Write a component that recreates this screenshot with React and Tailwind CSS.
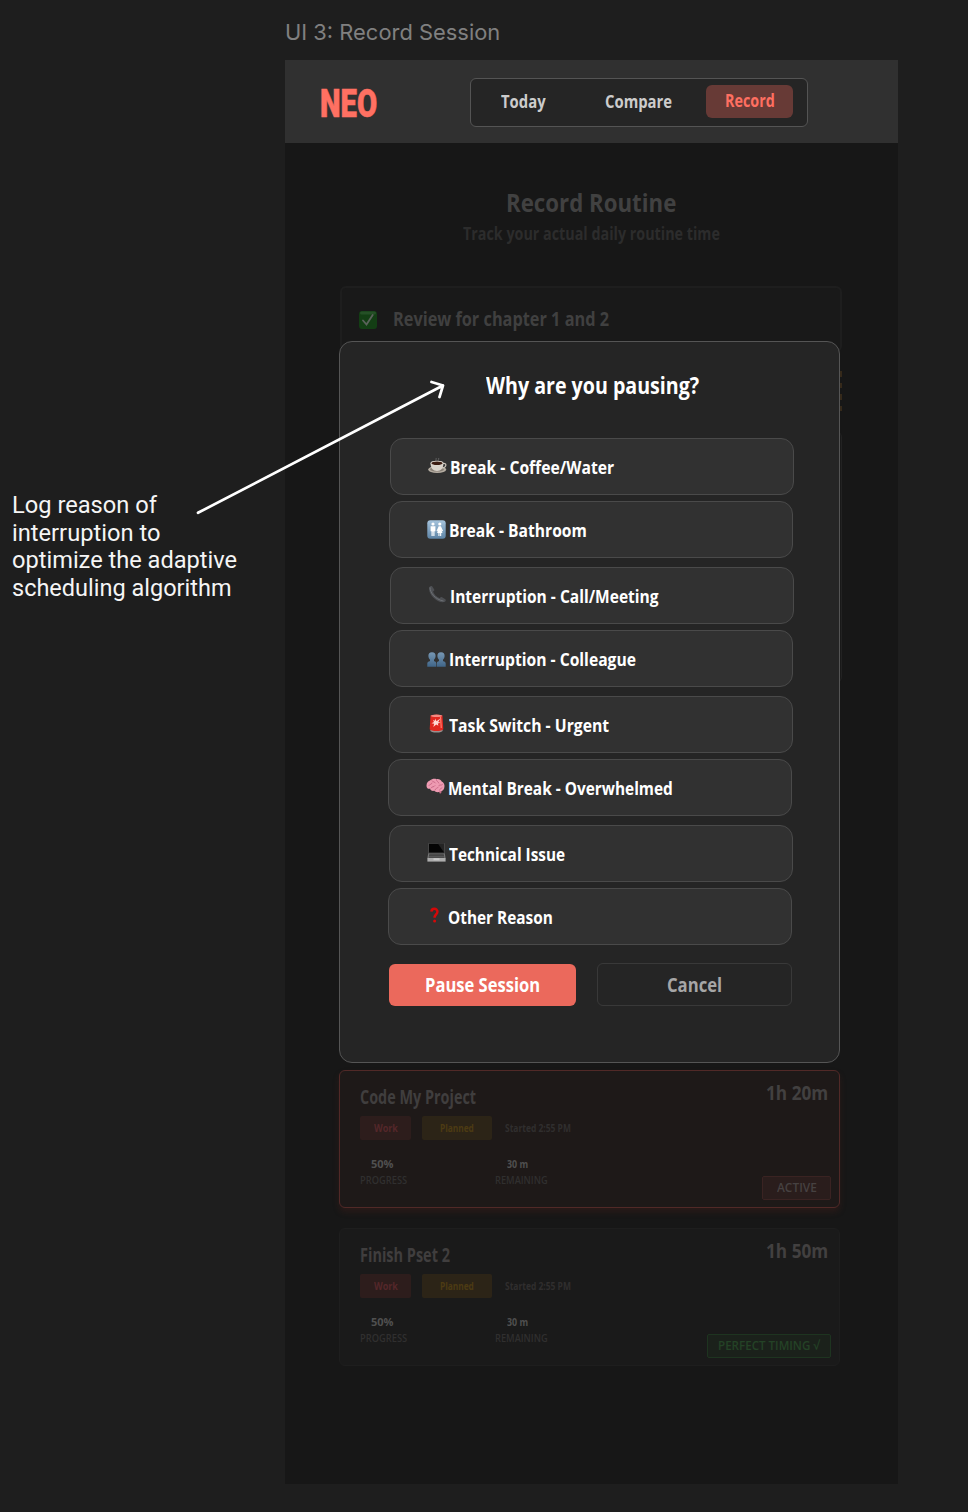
import React, { useLayoutEffect, useRef } from "react";

// Text squeezed horizontally so that it fills the width of its box.
function Fit({ className = "", children }) {
  const box = useRef(null);
  const inner = useRef(null);
  useLayoutEffect(() => {
    const natural = inner.current.offsetWidth;
    if (natural) {
      inner.current.style.transform = `scaleX(${box.current.clientWidth / natural})`;
    }
  }, []);
  return (
    <span ref={box} className={`flex shrink-0 items-center whitespace-nowrap ${className}`}>
      <span ref={inner} className="block shrink-0 origin-left">{children}</span>
    </span>
  );
}

function CoffeeIcon() {
  return (
    <svg viewBox="0 0 19 19" className="size-[19px]">
      <path d="M8 4c-1-1 1-1.500 0-3M10.500 4c-1-1 1-1.500 0-3" stroke="#6b6b6b" fill="none" strokeWidth=".8" />
      <ellipse cx="9.200" cy="12.500" rx="9" ry="3.600" fill="#b5ada2" />
      <ellipse cx="9" cy="12.300" rx="7" ry="2.300" fill="#877f75" />
      <path d="M15 6.500c4-.8 4 4-1 4.500" stroke="#c9c2b8" fill="none" strokeWidth="1.200" />
      <path d="M2.500 6c0 5 2.500 8 6.500 8s6.500-3 6.500-8z" fill="#d9d3ca" />
      <ellipse cx="9" cy="6" rx="6.500" ry="2.300" fill="#e8e2da" />
      <ellipse cx="9" cy="6.200" rx="5.600" ry="1.700" fill="#3c1d12" />
    </svg>
  );
}

function RestroomIcon() {
  return (
    <svg viewBox="0 0 19 19" className="size-[19px]">
      <defs>
        <linearGradient id="wc" x1="0" y1="0" x2="0" y2="1">
          <stop offset="0" stopColor="#a5c3dc" />
          <stop offset="1" stopColor="#5d84a6" />
        </linearGradient>
      </defs>
      <rect x=".3" y=".3" width="18.400" height="18.400" rx="3" fill="url(#wc)" />
      <circle cx="6" cy="4" r="1.600" fill="#fff" />
      <path d="M3.600 6.200h4.800v5h-.9V16H6.300v-4.500h-.6V16H4.500v-4.800h-.9z" fill="#fff" />
      <circle cx="12.800" cy="4" r="1.600" fill="#fff" />
      <path d="M11.700 6.200h2.200l2.200 4.800-1 .3-.8-1.600 1.200 3.300h-1.300V16h-1.100v-3h-.6v3h-1.100v-3h-1.300l1.200-3.300-.8 1.600-1-.3z" fill="#fff" />
    </svg>
  );
}

function PhoneIcon() {
  return (
    <svg viewBox="0 0 19 19" className="size-[19px]">
      <path d="M1.300 2.300C2 1 3.500.7 4.300 1.500l1.900 3c.5.900-.2 1.600-1.200 2.100.9 2.800 3.500 5.400 6.800 6.600.6-1 1.500-1.400 2.300-.9l3.200 1.900c1 .7.500 2.200-.9 2.900C9 18.500-.5 9 1.300 2.300z" fill="#4d4f53" />
      <path d="M2 2.400C2 7.500 7 14.500 15.500 16" stroke="#74777b" fill="none" strokeWidth=".8" />
    </svg>
  );
}

function PeopleIcon() {
  return (
    <svg viewBox="0 0 19 19" className="size-[19px]">
      <defs>
        <linearGradient id="ppl" x1="0" y1="0" x2="0" y2="1">
          <stop offset="0" stopColor="#7797b3" />
          <stop offset="1" stopColor="#3f6588" />
        </linearGradient>
      </defs>
      <path d="M5 2.200c2.600 0 3.700 1.500 3.600 3.800-.1 1.800-.8 3.100-1.600 3.700v1.300c1.200.6 2.200.8 2.200 2.500v3.300H.3v-3.300c0-1.700 1.500-1.900 2.700-2.500V9.700C2.200 9.100 1.500 7.800 1.400 6 1.300 3.700 2.400 2.200 5 2.200z" fill="url(#ppl)" />
      <path d="M14 2.200c2.600 0 3.700 1.500 3.600 3.800-.1 1.800-.8 3.100-1.600 3.700v1.300c1.200.6 2.700.8 2.700 2.500v3.300H9.800v-3.300c0-1.700 1-1.900 2.200-2.500V9.700c-.8-.6-1.500-1.900-1.600-3.700-.1-2.300 1-3.800 3.600-3.800z" fill="url(#ppl)" />
    </svg>
  );
}

function SirenIcon() {
  return (
    <svg viewBox="0 0 19 19" className="size-[19px]">
      <ellipse cx="9.500" cy="16.600" rx="6.300" ry="2" fill="#989290" />
      <path d="M3.500 1.800c0-1.500 12-1.500 12 0l.8 13.500c-1 2.400-12.600 2.400-13.600 0z" fill="#e0271f" />
      <ellipse cx="9.500" cy="1.800" rx="5.800" ry="1.200" fill="#f48a82" />
      <path d="M13.500 3l.8 11" stroke="#ff7565" strokeWidth="1.300" />
      <path d="M8.500 4.500l.9 2.700 4-2.800-2.200 3.500 2.300.9-2.700.6.600 2.300-2.200-1.300-2.900 2.600.9-3.200-2.700-.5 2.500-1.300-1-1.900 2 .7z" fill="#ffd9d4" />
    </svg>
  );
}

function BrainIcon() {
  return (
    <svg viewBox="0 0 19 19" className="size-[19px]">
      <path d="M12 12.500l1.800 4c1.500.3 2-1 1.600-3.500z" fill="#c66c86" />
      <path d="M.5 8.500C.5 5.500 2.500 4 4 3.500 6 1.500 9 1.500 10.500 2.200c2.500-.5 4.500.8 5.200 2.200 2 .8 2.800 2.800 2.800 4.600 0 3.300-1.700 5.300-4.500 5.300-1.500 1.500-4.700 1-5.700-.5-2.500.5-3.800-.6-4.300-2C1.700 12.200.5 10.800.5 8.500z" fill="#ee9bb2" />
      <path d="M3 8.500c1-2 2.500-.5 3-2.500M6 3.800c1 1.700 2.500.5 3.500 2.200M10.500 3c0 1.800 2 1.500 2.300 3M5 11c1-2 3-.5 4-2.300M9 13c.3-2 2.500-1.400 3.500-3M13 8.300c1.500-.8 2.500.4 3.500-.8M13.500 13c0-1 1.500-1.200 2.500-2.200" stroke="#c2607f" fill="none" strokeWidth=".8" strokeLinecap="round" />
    </svg>
  );
}

function LaptopIcon() {
  return (
    <svg viewBox="0 0 19 19" className="size-[19px]">
      <path d="M1.200.2h16.600v10H1.200z" fill="#4b4b4b" />
      <path d="M2 .8h15v8.800H2z" fill="#050505" />
      <path d="M11 .8h6v8.800z" fill="#242424" />
      <path d="M1.200 10.200h16.600l.8 5H.4z" fill="#737373" />
      <path d="M2.200 11.200h14.600M2 12.700h15M1.800 14.200h15.400" stroke="#2c2c2c" strokeWidth=".8" />
      <path d="M.4 15h18.200v3.600H.4z" fill="#adadad" />
      <path d="M6.500 15.200h6v2h-6z" fill="#c9c9c9" />
    </svg>
  );
}

function QuestionIcon() {
  return (
    <svg viewBox="0 0 19 19" className="size-[19px]">
      <path d="M5.400 4.600C5.500.8 11.600.8 11.400 4.800c-.1 2.700-2.800 2.700-2.800 6" stroke="#d40808" fill="none" strokeWidth="2.500" />
      <circle cx="8.600" cy="14" r="1.500" fill="#d40808" />
    </svg>
  );
}

const reasons = [
  { label: "Break - Coffee/Water", Icon: CoffeeIcon, box: "ml-[50px]", text: "w-[164px]", icon: "mt-0" },
  { label: "Break - Bathroom", Icon: RestroomIcon, box: "ml-[49px] mt-[7px]", text: "w-[138px]", icon: "-mt-px" },
  { label: "Interruption - Call/Meeting", Icon: PhoneIcon, box: "ml-[50px] mt-[10px]", text: "w-[209px]", icon: "-mt-0.5" },
  { label: "Interruption - Colleague", Icon: PeopleIcon, box: "ml-[49px] mt-[7px]", text: "w-[187px]", icon: "mt-0.5" },
  { label: "Task Switch - Urgent", Icon: SirenIcon, box: "ml-[49px] mt-[10px]", text: "w-[160px]", icon: "-mt-0.5" },
  { label: "Mental Break - Overwhelmed", Icon: BrainIcon, box: "ml-[48px] mt-[7px]", text: "w-[225px]", icon: "-mt-0.5" },
  { label: "Technical Issue", Icon: LaptopIcon, box: "ml-[49px] mt-[10px]", text: "w-[116px]", icon: "-mt-0.5" },
  { label: "Other Reason", Icon: QuestionIcon, box: "ml-[48px] mt-[7px]", text: "w-[105px]", icon: "mt-0" },
];

function PauseDialog() {
  return (
    <section className="absolute left-[54px] top-[281px] h-[722px] w-[501px] rounded-[13px] border border-[#555555] bg-[#252525]">
      <h2 className="mt-[31px] ml-[146px] text-[23.5px] leading-6 font-bold text-white">
        <Fit className="w-[213px]">Why are you pausing?</Fit>
      </h2>
      <div className="mt-[41px] flex flex-col">
        {reasons.map(({ label, Icon, box, text, icon }) => (
          <button key={label} className={`flex h-[57px] w-[404px] -mb-px items-center rounded-[13px] border border-[#4a4a4a] bg-[#313131] pl-[37px] ${box}`}>
            <span className={`mr-[3px] shrink-0 ${icon}`}><Icon /></span>
            <Fit className={`text-[18px] leading-5 font-bold text-white ${text}`}>{label}</Fit>
          </button>
        ))}
      </div>
      <div className="mt-[20px] ml-[49px] flex gap-[21px]">
        <button className="flex h-[42px] w-[187px] items-center justify-center rounded-md bg-[#eb695c] text-[20px] font-bold text-white">
          <Fit className="w-[115px]">Pause Session</Fit>
        </button>
        <button className="-mt-px flex h-[43px] w-[195px] items-center justify-center rounded-md border border-[#393939] text-[20px] font-bold text-[#a6a6a6]">
          <Fit className="w-[55px]">Cancel</Fit>
        </button>
      </div>
    </section>
  );
}

function TaskCard({ title, titleWidth, duration, active, children, className = "" }) {
  return (
    <article className={`flex h-[138px] w-[501px] shrink-0 justify-between rounded-md border ${active ? "border-[#512927] bg-[#1e1918] shadow-[0_4px_6px_rgba(90,35,30,0.28)]" : "border-[#1e1e1e] bg-[#1a1a1a]"} ${className}`}>
      <div className="ml-5 pt-[16px]">
        <h3 className="text-[19px] leading-5 font-bold text-[#403e3e]">
          <Fit className={titleWidth}>{title}</Fit>
        </h3>
        <div className="mt-[9px] flex h-6 items-center text-[10.5px] leading-4 font-bold">
          <span className="flex h-6 w-[51px] items-center justify-center rounded-[2px] bg-[#2d1d1c] text-[#54272a]"><Fit className="w-[24px]">Work</Fit></span>
          <span className="ml-[11px] flex h-6 w-[70px] items-center justify-center rounded-[2px] bg-[#2c2417] text-[#4c3b13]"><Fit className="w-[34px]">Planned</Fit></span>
          <Fit className="ml-[13px] w-[66px] text-[#302e2e]">Started 2:55 PM</Fit>
        </div>
        <div className="mt-4 flex text-[10.500px] leading-4 font-bold">
          <div className="w-[135px]">
            <Fit className="ml-[11px] w-[22px] text-[#505050]">50%</Fit>
            <Fit className="w-[47px] font-semibold text-[#302f2f]">PROGRESS</Fit>
          </div>
          <div>
            <Fit className="ml-[12px] w-[21px] text-[#505050]">30 m</Fit>
            <Fit className="w-[53px] font-semibold text-[#302f2f]">REMAINING</Fit>
          </div>
        </div>
      </div>
      <div className="mr-2 flex flex-col items-end justify-between pt-[12px] pb-[7px]">
        <div className="mr-[3px] text-[20px] leading-5 font-bold text-[#424040]"><Fit className="w-[62px]">{duration}</Fit></div>
        {children}
      </div>
    </article>
  );
}

export default function App() {
  return (
    <div className="relative flex h-[1512px] w-[968px] overflow-hidden bg-[#1e1e1e] font-['Open_Sans',sans-serif]">
      <aside className="w-[285px] shrink-0 pt-[492px] pl-[12px] font-['Roboto',sans-serif] text-[23.500px] leading-[27.600px] text-[#f5f5f5]">
        <Fit className="w-[145px]">Log reason of</Fit>
        <Fit className="w-[148px]">interruption to</Fit>
        <Fit className="w-[225px]">optimize the adaptive</Fit>
        <Fit className="w-[220px]">scheduling algorithm</Fit>
      </aside>

      <div className="w-[613px] shrink-0">
        <div className="flex h-[60px] items-center pt-[4px] font-['Inter',sans-serif] text-[22px] text-[#808080]">
          <Fit className="w-[215px]">UI 3: Record Session</Fit>
        </div>

        <main className="relative flex h-[1424px] flex-col bg-[#171717]">
          <header className="flex h-[83px] shrink-0 items-start bg-[#303030]">
            <div className="mt-[24px] ml-[35px] font-['Roboto',sans-serif] text-[39px] leading-[40px] font-black text-[#ff7062] [-webkit-text-stroke:0.6px_#ff7062]">
              <Fit className="w-[57px]">NEO</Fit>
            </div>
            <nav className="mt-[18px] ml-[93px] flex h-[49px] w-[338px] items-start rounded-md border border-[#545454] bg-[#252525] text-[17.500px] leading-5 font-bold text-[#cccccc]">
              <Fit className="mt-[12px] ml-[30px] w-[45px]">Today</Fit>
              <Fit className="mt-[12px] ml-[59px] w-[67px]">Compare</Fit>
              <span className="mt-[6px] ml-[34px] flex h-[33px] w-[87px] items-center justify-center rounded-md bg-[#673a36] pb-[3px] text-[#ff6f61]">
                <Fit className="w-[50px]">Record</Fit>
              </span>
            </nav>
          </header>

          <div className="flex flex-col items-center pt-[44px] font-bold">
            <h1 className="mr-[2px] text-[25px] leading-[30px] text-[#414141]"><Fit className="w-[170px]">Record Routine</Fit></h1>
            <p className="mt-[6px] text-[17.500px] leading-5 text-[#2c2c2c]"><Fit className="w-[257px]">Track your actual daily routine time</Fit></p>
          </div>

          <section className="mt-[43px] ml-[55px] flex h-[66px] w-[502px] shrink-0 items-start rounded-md border-2 border-[#1e1e1e] bg-[#191919]">
            <svg viewBox="0 0 18 18" className="mt-[23px] ml-[17px] size-[18px]">
              <rect width="18" height="18" rx="3" fill="#133e14" />
              <rect x="1" y=".5" width="16" height="3" rx="1.500" fill="#255026" />
              <path d="M4 9.500l3.500 4L13.700 4" stroke="#5b625b" strokeWidth="1.800" fill="none" strokeLinecap="round" />
            </svg>
            <Fit className="mt-[19px] ml-[16px] w-[216px] text-[20px] leading-6 font-bold text-[#404040]">Review for chapter 1 and 2</Fit>
          </section>
          <div className="mt-[19px] ml-[555px] flex w-[2px] shrink-0 flex-col gap-[6px]">
            <i className="h-[5.500px] bg-[#35291a]" />
            <i className="h-[5.500px] bg-[#35291a]" />
            <i className="h-[5.500px] bg-[#35291a]" />
            <i className="h-[5.500px] bg-[#35291a]" />
          </div>
          <section className="mt-[20px] ml-[55px] h-[252px] w-[501.500px] shrink-0 rounded-md border border-[#222222] bg-[#191919]" />

          <TaskCard className="mt-[387px] ml-[54px]" title="Code My Project" titleWidth="w-[116px]" duration="1h 20m" active>
            <span className="flex h-6 w-[69px] items-center justify-center rounded-[2px] border border-[#3a2322] bg-[#2a1d1c] text-[12.500px] font-semibold text-[#464141]">
              <Fit className="w-[40px]">ACTIVE</Fit>
            </span>
          </TaskCard>

          <TaskCard className="mt-[20px] ml-[54px]" title="Finish Pset 2" titleWidth="w-[90px]" duration="1h 50m">
            <span className="flex h-6 w-[124px] items-center justify-center rounded-[2px] border border-[#1e3420] bg-[#1b211b] text-[12.500px] font-semibold text-[#244226]">
              <Fit className="w-[102px]">PERFECT TIMING √</Fit>
            </span>
          </TaskCard>

          <PauseDialog />
        </main>
      </div>

      <svg viewBox="0 0 260 140" className="pointer-events-none absolute top-[378px] left-[192px] h-[140px] w-[260px]">
        <path d="M6 134.800L251 7.500M239.500 4L251 7.500L247.500 19" stroke="#fff" strokeWidth="2.700" fill="none" strokeLinecap="round" strokeLinejoin="round" />
      </svg>
    </div>
  );
}
